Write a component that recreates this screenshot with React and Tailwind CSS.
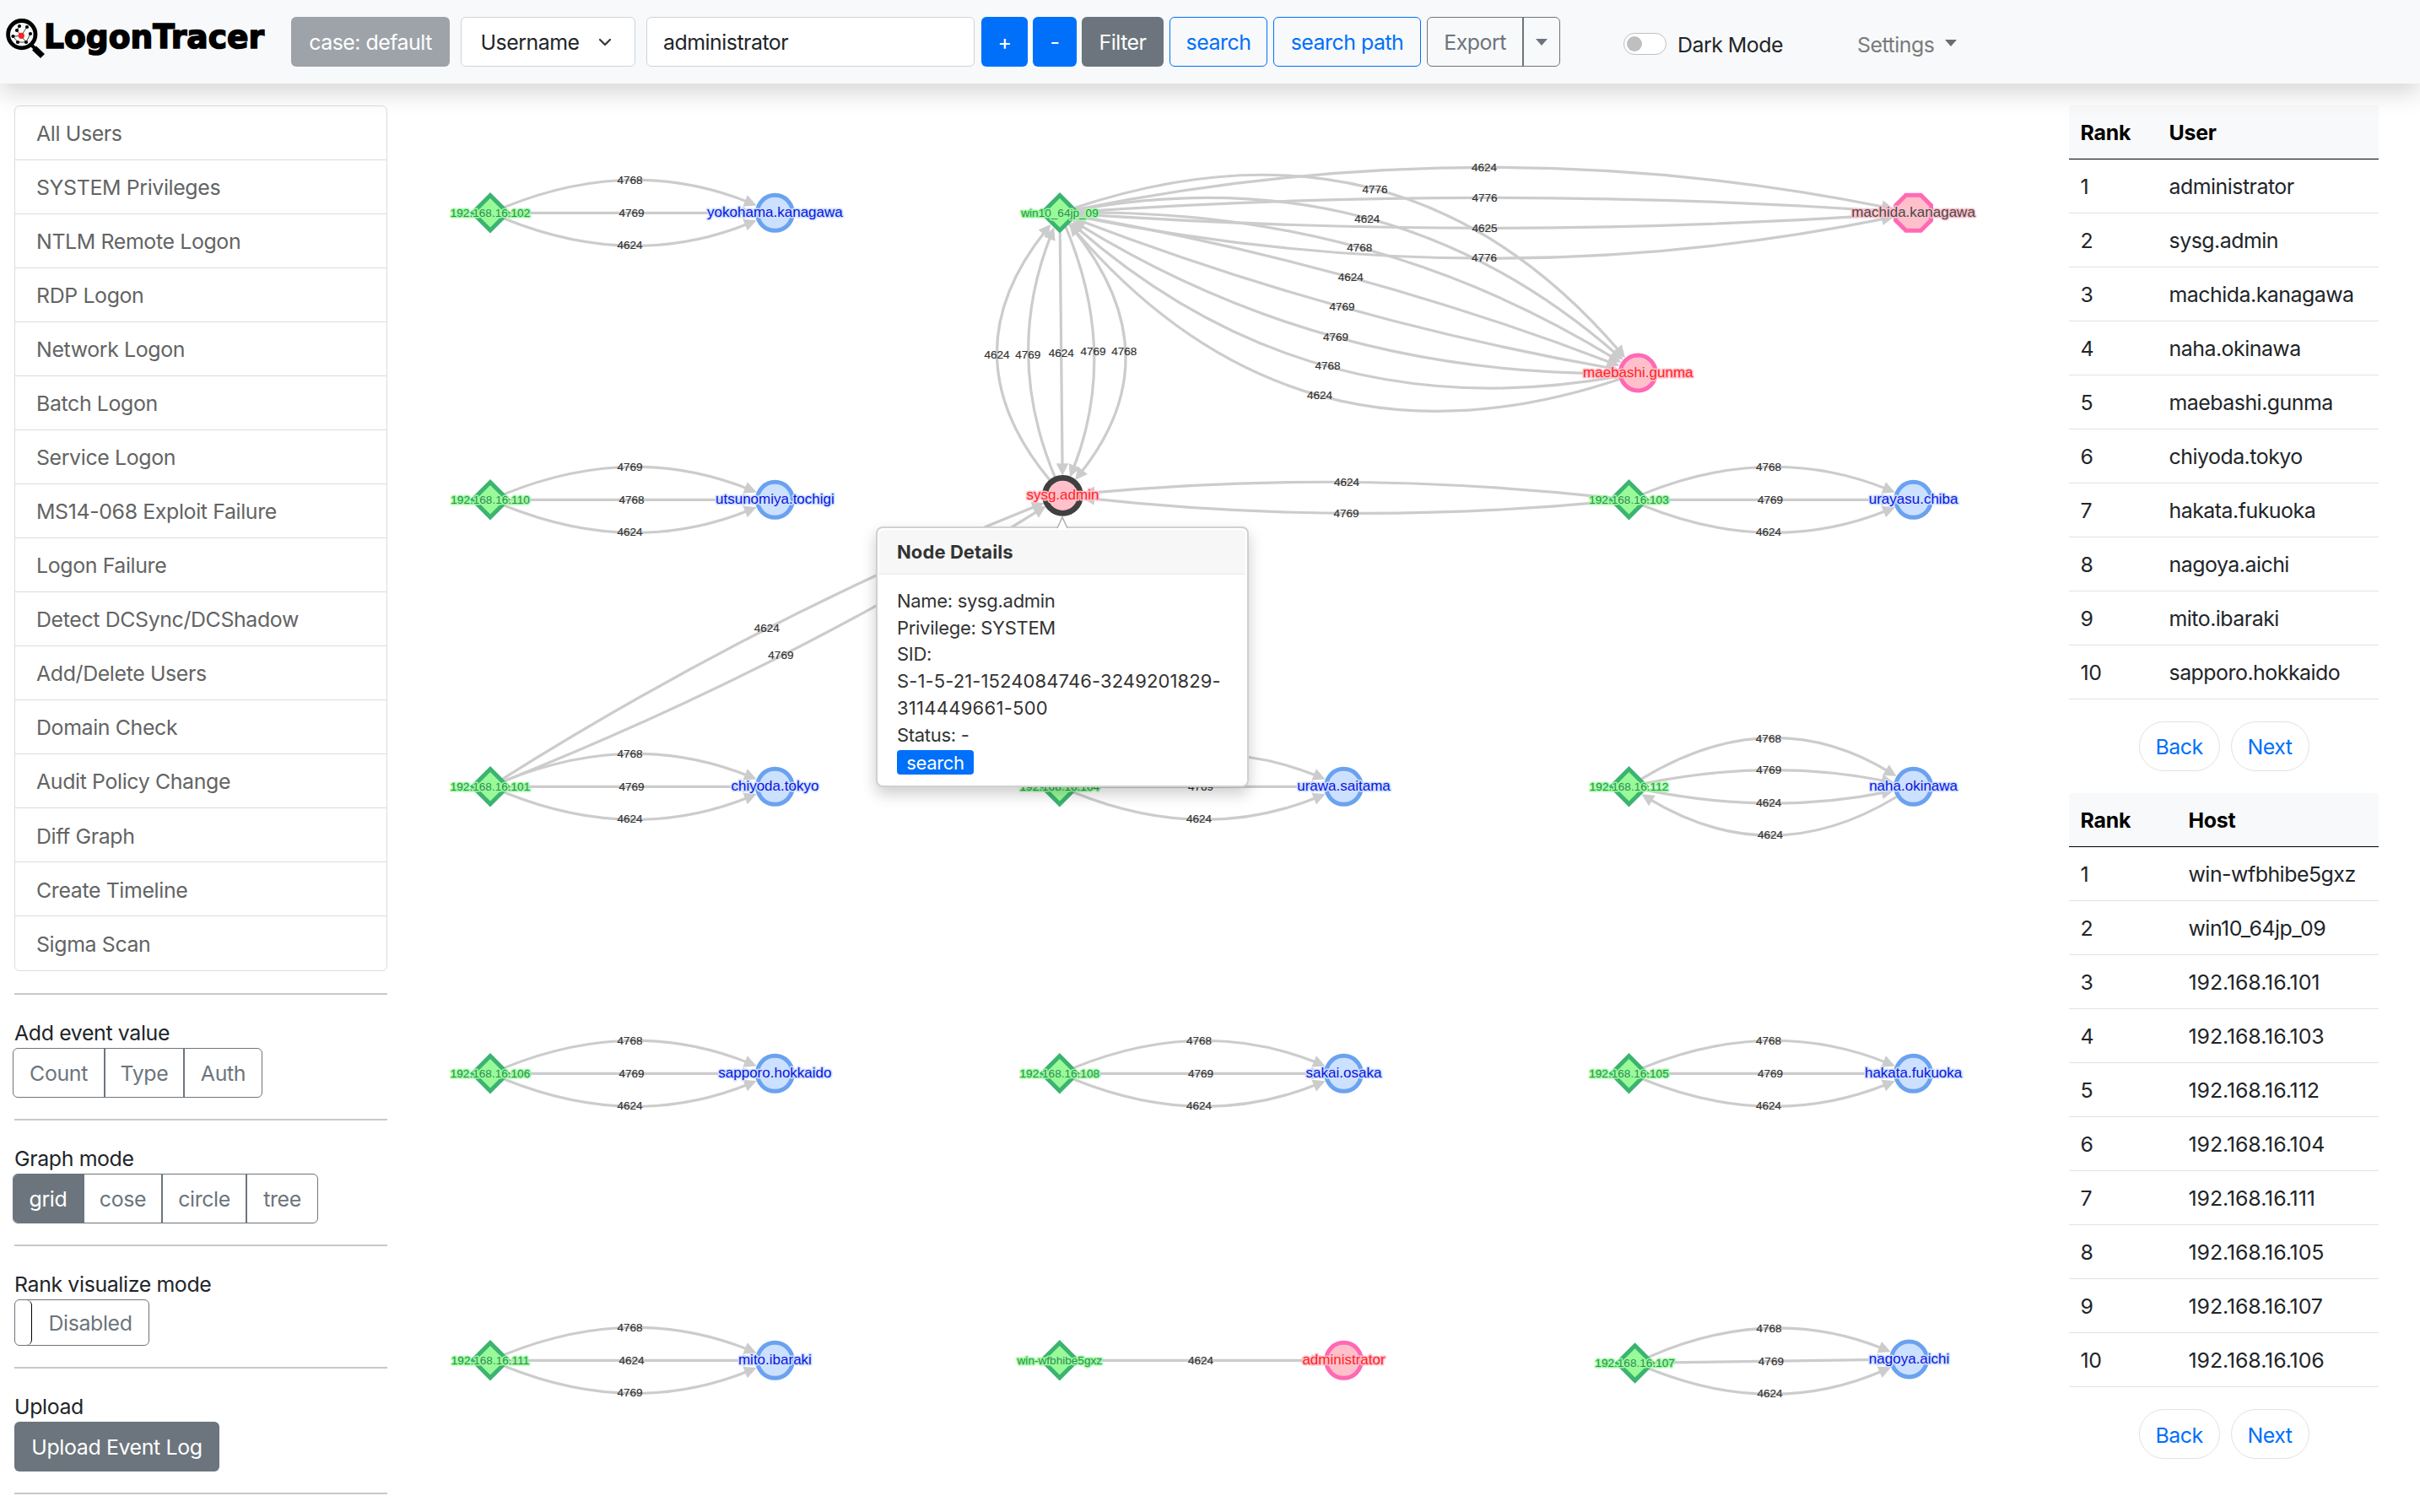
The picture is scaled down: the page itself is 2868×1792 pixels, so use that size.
import { ChevronDown } from 'lucide-react'

const menuItems = [
  'All Users', 'SYSTEM Privileges', 'NTLM Remote Logon', 'RDP Logon',
  'Network Logon', 'Batch Logon', 'Service Logon', 'MS14-068 Exploit Failure',
  'Logon Failure', 'Detect DCSync/DCShadow', 'Add/Delete Users', 'Domain Check',
  'Audit Policy Change', 'Diff Graph', 'Create Timeline', 'Sigma Scan',
]

const userRanks = [
  'administrator', 'sysg.admin', 'machida.kanagawa', 'naha.okinawa', 'maebashi.gunma',
  'chiyoda.tokyo', 'hakata.fukuoka', 'nagoya.aichi', 'mito.ibaraki', 'sapporo.hokkaido',
]

const hostRanks = [
  'win-wfbhibe5gxz', 'win10_64jp_09', '192.168.16.101', '192.168.16.103', '192.168.16.112',
  '192.168.16.104', '192.168.16.111', '192.168.16.105', '192.168.16.107', '192.168.16.106',
]

// id: [x, y, kind, label]
const nodes = {
  h102: [581, 252.3, 'host', '192.168.16.102'],
  yokohama: [918.4, 252.3, 'user', 'yokohama.kanagawa'],
  win10: [1256, 252.3, 'host', 'win10_64jp_09'],
  machida: [2267.6, 252.3, 'removed', 'machida.kanagawa'],
  maebashi: [1941.3, 442, 'system', 'maebashi.gunma'],
  h110: [581, 592.3, 'host', '192.168.16.110'],
  utsunomiya: [918.4, 592.3, 'user', 'utsunomiya.tochigi'],
  sysg: [1259.4, 587.3, 'selected', 'sysg.admin'],
  h103: [1930.5, 592.3, 'host', '192.168.16.103'],
  urayasu: [2267.6, 592.3, 'user', 'urayasu.chiba'],
  h101: [581, 932.3, 'host', '192.168.16.101'],
  chiyoda: [918.4, 932.3, 'user', 'chiyoda.tokyo'],
  h104: [1255.8, 932.3, 'host', '192.168.16.104'],
  urawa: [1592.5, 932.3, 'user', 'urawa.saitama'],
  h112: [1930.5, 932.3, 'host', '192.168.16.112'],
  naha: [2267.6, 932.3, 'user', 'naha.okinawa'],
  h106: [581, 1272.3, 'host', '192.168.16.106'],
  sapporo: [918.4, 1272.3, 'user', 'sapporo.hokkaido'],
  h108: [1255.8, 1272.3, 'host', '192.168.16.108'],
  sakai: [1592.5, 1272.3, 'user', 'sakai.osaka'],
  h105: [1930.5, 1272.3, 'host', '192.168.16.105'],
  hakata: [2267.6, 1272.3, 'user', 'hakata.fukuoka'],
  h111: [581, 1612.3, 'host', '192.168.16.111'],
  mito: [918.4, 1612.3, 'user', 'mito.ibaraki'],
  wfb: [1255.8, 1612.3, 'host', 'win-wfbhibe5gxz'],
  admin: [1592.5, 1612.3, 'system', 'administrator'],
  h107: [1937.6, 1615.4, 'host', '192.168.16.107'],
  nagoya: [2262.6, 1611, 'user', 'nagoya.aichi'],
}

// [from, to, labels], a label starting with "<" points back at "from"
const bundles = [
  ['h102', 'yokohama', ['4768', '4769', '4624']],
  ['win10', 'maebashi', ['4776', '4624', '4768', '4624', '4769', '<4769', '<4768', '<4624']],
  ['win10', 'machida', ['4624', '4776', '4625', '4776']],
  ['win10', 'sysg', ['4768', '4769', '4624', '<4769', '<4624']],
  ['h103', 'sysg', ['4769', '4624']],
  ['h101', 'sysg', ['4624', '4769']],
  ['h110', 'utsunomiya', ['4769', '4768', '4624']],
  ['h103', 'urayasu', ['4768', '4769', '4624']],
  ['h101', 'chiyoda', ['4768', '4769', '4624']],
  ['h104', 'urawa', ['4768', '4769', '4624']],
  ['h112', 'naha', ['4768', '4769', '4624', '<4624']],
  ['h106', 'sapporo', ['4768', '4769', '4624']],
  ['h108', 'sakai', ['4768', '4769', '4624']],
  ['h105', 'hakata', ['4768', '4769', '4624']],
  ['h111', 'mito', ['4768', '4624', '4769']],
  ['wfb', 'admin', ['4624']],
  ['h107', 'nagoya', ['4768', '4769', '4624']],
]

const STEP = 68.3
const ARROW = 14.6

const kinds = {
  host: { fill: '#98fb98', stroke: '#3cb371', text: '#2e8b57', size: 13.6 },
  user: { fill: '#cce0ff', stroke: '#6aa2ef', text: '#0b14dc', size: 17 },
  system: { fill: '#ffc0cb', stroke: '#ff69b4', text: '#ff2424', size: 17 },
  selected: { fill: '#ffc0cb', stroke: '#404040', text: '#ff2424', size: 17 },
  removed: { fill: '#ffc0cb', stroke: '#ff69b4', text: '#484848', size: 17 },
}

// point where the ray from a node's centre towards (cx, cy) leaves its outline
function border([x, y, kind], cx, cy) {
  const d = Math.hypot(cx - x, cy - y)
  const ux = (cx - x) / d
  const uy = (cy - y) / d
  const r = kind === 'host' ? 24 / (Math.abs(ux) + Math.abs(uy)) : 23.5
  return [x + ux * r, y + uy * r]
}

function Edge({ from, to, offset, label }) {
  const back = label.startsWith('<')
  const a = nodes[from]
  const b = nodes[to]
  const len = Math.hypot(b[0] - a[0], b[1] - a[1])
  const cx = (a[0] + b[0]) / 2 - ((b[1] - a[1]) / len) * offset
  const cy = (a[1] + b[1]) / 2 + ((b[0] - a[0]) / len) * offset
  const start = border(back ? b : a, cx, cy)
  const tip = border(back ? a : b, cx, cy)
  const d = Math.hypot(cx - tip[0], cy - tip[1])
  const ux = (cx - tip[0]) / d
  const uy = (cy - tip[1]) / d
  const ex = tip[0] + ux * ARROW
  const ey = tip[1] + uy * ARROW
  const w = ARROW / 2
  const mx = start[0] / 4 + cx / 2 + (tip[0] + ux * 5) / 4 - (offset ? 0.8 : 0)
  const my = start[1] / 4 + cy / 2 + (tip[1] + uy * 5) / 4
  return (
    <g>
      <path d={`M${start[0]} ${start[1]}Q${cx} ${cy} ${ex - ux * 5} ${ey - uy * 5}`} fill="none" stroke="#ccc" strokeWidth="3.2" />
      <path d={`M${tip[0]} ${tip[1]}L${ex - uy * w} ${ey + ux * w}L${ex + uy * w} ${ey - ux * w}Z`} fill="#ccc" />
      <text x={mx} y={my + 4.4} fontSize="13.5" textAnchor="middle" fill="#333" stroke="#333" strokeWidth="0.2">{label.replace('<', '')}</text>
    </g>
  )
}

function Node({ node: [x, y, kind, label] }) {
  const k = kinds[kind]
  const shape = { fill: k.fill, stroke: k.stroke, strokeWidth: 5 }
  return (
    <g transform={`translate(${x} ${y})`}>
      {kind === 'host' && <path d="M0-20.7 20.7 0 0 20.7-20.7 0Z" {...shape} />}
      {(kind === 'user' || kind === 'system') && <circle r="21" {...shape} />}
      {kind === 'selected' && <circle r="21" {...shape} strokeWidth="6.8" />}
      {kind === 'removed' && <path d="M-8.8-21H8.8L21-8.8V8.8L8.8 21H-8.8L-21 8.8V-8.8Z" {...shape} />}
      <text y="4.6" fontSize={k.size} textAnchor="middle" fill={k.text}
        stroke={k.fill} strokeWidth="3.2" strokeLinejoin="round" paintOrder="stroke">{label}</text>
    </g>
  )
}

function Graph() {
  return (
    <svg viewBox="460 99 1992 1693" width="1992" height="1693" fontFamily="Liberation Sans, Arial, sans-serif" className="tracking-normal font-normal">
      {bundles.map(([from, to, labels]) => labels.map((label, i) => (
        <Edge key={from + to + i} from={from} to={to} label={label} offset={(i - (labels.length - 1) / 2) * STEP} />
      )))}
      {Object.entries(nodes).map(([id, node]) => <Node key={id} node={node} />)}
    </svg>
  )
}

function Logo() {
  const dots = [[23, 31], [32, 32], [20, 36], [36, 40], [15.5, 43], [21, 50], [31, 50]]
  return (
    <svg width="320" height="99" viewBox="0 0 320 99" className="shrink-0 overflow-visible tracking-normal">
      <circle cx="25.8" cy="40.7" r="16.2" fill="#f8f9fa" stroke="#000" strokeWidth="4.8" />
      <path d="M36 52l5 5" stroke="#000" strokeWidth="4" />
      <path d="M40.5 57L50.5 66.5" stroke="#000" strokeWidth="7" />
      <path d="M25 42.5L31 50L36 40M25 42.5L15.5 43L21 50H31M25 42.5L32 32M25 42.5L20 36L23 31" fill="none" stroke="#333" strokeWidth="0.9" />
      {dots.map(([x, y]) => <circle key={x} cx={x} cy={y} r="2.1" />)}
      <circle cx="25.3" cy="42.3" r="3.6" fill="#ff2020" />
      <text x="52" y="57.2" textLength="261" lengthAdjust="spacingAndGlyphs" fontFamily="DejaVu Sans, sans-serif"
        fontWeight="700" fontSize="39" stroke="#000" strokeWidth="1.6">LogonTracer</text>
    </svg>
  )
}

function Caret({ className }) {
  return <svg width="14" height="8" viewBox="0 0 14 8" className={className}><path d="M0 0H14L7 8Z" fill="currentColor" /></svg>
}

function Header() {
  const btn = 'flex items-center justify-center h-[59px] pt-0.5 rounded-md shrink-0'
  return (
    <header className="relative z-10 flex items-center h-[99px] shrink-0 bg-[#f8f9fa] shadow-[0_12.8px_25.6px_rgba(0,0,0,0.15)]">
      <Logo />
      <div className={`${btn} ml-[25px] w-[188px] bg-[#9ea3a9] text-white`}>case: default</div>
      <div className={`${btn} ml-[13px] w-[207px] border border-[#ced4da] bg-white gap-[19px]`}>
        Username <ChevronDown size={24} strokeWidth={2.3} className="-mt-0.5 text-[#343a40]" />
      </div>
      <div className="ml-[13px] w-[389px] h-[59px] shrink-0 flex items-center pl-[19px] pt-0.5 rounded-md border border-[#ced4da] bg-white">administrator</div>
      <button className={`${btn} ml-2 w-[55px] bg-[#0070fa] text-white`}>+</button>
      <button className={`${btn} ml-1.5 w-[52px] bg-[#0070fa] text-white`}>-</button>
      <button className={`${btn} ml-1.5 w-[97px] bg-[#6c757d] text-white`}>Filter</button>
      <button className={`${btn} ml-[7px] w-[116px] border border-[#0070fa] text-[#0070fa]`}>search</button>
      <button className={`${btn} ml-[7px] w-[175px] border border-[#0070fa] text-[#0070fa]`}>search path</button>
      <div className="ml-[7px] w-[158px] h-[59px] shrink-0 flex items-center rounded-md border border-[#6c757d] text-[#6c757d]">
        <span className="flex-1 pt-0.5 text-center">Export</span>
        <span className="flex items-center justify-center w-[44px] h-full border-l-2 border-[#6c757d]"><Caret /></span>
      </div>
      <div className="ml-[75px] mt-[5px] flex items-center">
        <span className="w-[51px] h-[26px] rounded-full border border-[#bfbfbf] bg-white flex items-center pl-[3px]">
          <span className="size-[18px] rounded-full bg-[#bfbfbf]" />
        </span>
        <span className="ml-[13px] pt-0.5">Dark Mode</span>
        <span className="ml-[88px] pt-0.5 text-[#7a7b7c]">Settings</span>
        <Caret className="ml-[13px] -mt-0.5 text-[#6b6c6d]" />
      </div>
    </header>
  )
}

function ButtonGroup({ items }) {
  return (
    <div className="-ml-0.5 flex w-fit h-[59px] rounded-md border border-[#6c757d] text-[#6c757d] overflow-hidden divide-x-2 divide-[#6c757d]">
      {items.map(([label, width, active]) => (
        <span key={label} className={`${width} flex items-center justify-center pt-px ${active ? 'bg-[#6c757d] text-white' : ''}`}>{label}</span>
      ))}
    </div>
  )
}

function Sidebar() {
  return (
    <aside className="w-[460px] shrink-0 pl-[17px] pt-[26px] tracking-[-0.015em]">
      <ul className="w-[442px] rounded-md border border-[#dcdcdd] divide-y divide-[#dcdcdd] overflow-hidden">
        {menuItems.map(item => (
          <li key={item} className="h-[64.03px] flex items-center pl-[25px] pt-0.5 text-[#636464]">{item}</li>
        ))}
      </ul>
      <section className="mt-[25.5px] w-[442px] h-[149px] border-t-2 border-[#c7c8c9] pt-[25px]">
        <p className="h-[38px] leading-[41px]">Add event value</p>
        <ButtonGroup items={[['Count', 'w-[109px]'], ['Type', 'w-[94px]'], ['Auth', 'w-[91px]']]} />
      </section>
      <section className="w-[442px] h-[149px] border-t-2 border-[#c7c8c9] pt-[25px]">
        <p className="h-[38px] leading-[41px]">Graph mode</p>
        <ButtonGroup items={[['grid', 'w-[84px]', true], ['cose', 'w-[93px]'], ['circle', 'w-[100px]'], ['tree', 'w-[83px]']]} />
      </section>
      <section className="w-[442px] h-[145px] border-t-2 border-[#c7c8c9] pt-[25px]">
        <p className="h-[38px] leading-[41px]">Rank visualize mode</p>
        <div className="flex w-[160px] h-[55px] rounded-md border border-[#6c757d] text-[#6c757d]">
          <span className="w-5 h-full rounded-r-md border-r border-black" />
          <span className="flex-1 flex items-center justify-center pt-px">Disabled</span>
        </div>
      </section>
      <section className="w-[442px] h-[151px] border-y-2 border-[#c7c8c9] pt-[25px]">
        <p className="h-[38px] leading-[41px]">Upload</p>
        <button className="w-[243px] h-[59px] pt-px rounded-md bg-[#6c757d] text-white">Upload Event Log</button>
      </section>
    </aside>
  )
}

function RankTable({ title, rows, cols }) {
  return (
    <div>
      <div className={`grid ${cols} items-center h-[64px] pl-[13.5px] pt-0.5 bg-[#f8f9fa] border-b-[1.6px] border-black font-bold tracking-[-0.01em] text-black`}>
        <span>Rank</span><span>{title}</span>
      </div>
      {rows.map((row, i) => (
        <div key={row} className={`grid ${cols} items-center h-[64.03px] pl-[13.5px] pt-px border-b border-[#dee2e6]`}>
          <span>{i + 1}</span>
          <span className={row.startsWith('192') ? 'tracking-[-0.003em]' : ''}>{row}</span>
        </div>
      ))}
      <div className="mt-[26px] h-[59px] flex justify-center gap-[13px] text-[#0070fa]">
        <button className="w-24 pt-0.5 rounded-full border border-[#dee2e6]">Back</button>
        <button className="w-[93px] pt-0.5 rounded-full border border-[#dee2e6]">Next</button>
      </div>
    </div>
  )
}

function NodeDetails() {
  return (
    <div className="absolute left-[578px] top-[525px] w-[442px] h-[309px] rounded-lg border-2 border-[#d0d0d0] bg-white p-0.5 text-[22px] leading-[31.7px] tracking-[-0.014em] text-[#333] shadow-[0_8px_18px_rgba(0,0,0,0.2)]">
      <svg width="14" height="14" viewBox="0 0 14 14" className="absolute left-[212px] -top-[14px]"><path d="M1 14L7 1L13 14" fill="#fff" stroke="#aaa" strokeWidth="1.4" /></svg>
      <div className="h-[53px] flex items-center pl-[21px] pt-px rounded-t-md bg-[#f7f7f7] border-b border-[#ebebeb] font-bold tracking-[0.004em]">Node Details</div>
      <div className="pl-[21px] pt-4">
        <p>Name: sysg.admin</p>
        <p>Privilege: SYSTEM</p>
        <p>SID:</p>
        <p className="whitespace-nowrap tracking-[0.005em]">S-1-5-21-1524084746-3249201829-</p>
        <p className="tracking-[0.012em]">3114449661-500</p>
        <p>Status: -</p>
        <button className="mt-0.5 block w-[91px] h-[29px] leading-[31px] rounded bg-[#0070fa] text-white">search</button>
      </div>
    </div>
  )
}

export default function App() {
  return (
    <div className="flex flex-col w-[2868px] h-[1792px] overflow-hidden bg-white font-['Inter',sans-serif] font-[440] text-[24.9px] leading-[38.4px] tracking-[-0.02em] text-[#212529]">
      <Header />
      <div className="flex flex-1 min-h-0">
        <Sidebar />
        <main className="relative w-[1992px] shrink-0">
          <Graph />
          <NodeDetails />
        </main>
        <aside className="w-[367px] shrink-0 pt-[26px] space-y-[26px]">
          <RankTable title="User" rows={userRanks} cols="grid-cols-[105px_1fr]" />
          <RankTable title="Host" rows={hostRanks} cols="grid-cols-[128px_1fr]" />
        </aside>
      </div>
    </div>
  )
}
